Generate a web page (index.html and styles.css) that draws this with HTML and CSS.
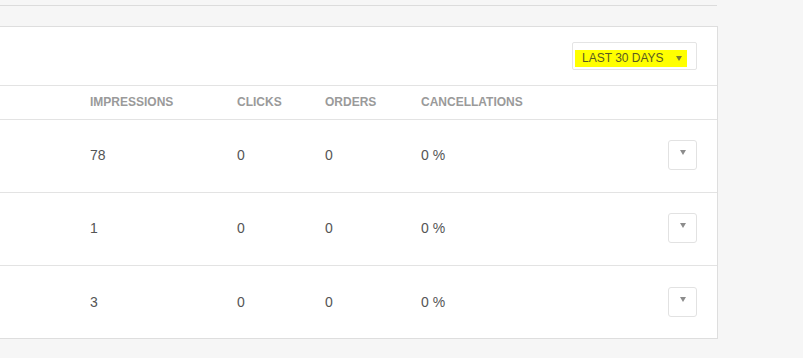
FILE: index.html
```html
<!DOCTYPE html>
<html>
<head>
<meta charset="utf-8">
<link rel="stylesheet" href="styles.css">
</head>
<body>
  <div class="topbar"></div>
  <section class="card">
    <div class="card-head">
      <div class="range-select">
        <span class="range-label">LAST 30 DAYS<i class="caret"></i></span>
      </div>
    </div>
    <div class="row head">
      <div></div>
      <div>IMPRESSIONS</div>
      <div>CLICKS</div>
      <div>ORDERS</div>
      <div>CANCELLATIONS</div>
      <div></div>
    </div>
    <div class="row">
      <div></div>
      <div>78</div>
      <div>0</div>
      <div>0</div>
      <div>0 %</div>
      <div class="actions"><button class="menu-btn"><i class="caret"></i></button></div>
    </div>
    <div class="row">
      <div></div>
      <div>1</div>
      <div>0</div>
      <div>0</div>
      <div>0 %</div>
      <div class="actions"><button class="menu-btn"><i class="caret"></i></button></div>
    </div>
    <div class="row last">
      <div></div>
      <div>3</div>
      <div>0</div>
      <div>0</div>
      <div>0 %</div>
      <div class="actions"><button class="menu-btn"><i class="caret"></i></button></div>
    </div>
  </section>
</body>
</html>
```

FILE: styles.css
```css
html, body {
  margin: 0;
  padding: 0;
  background: #f6f6f6;
  font-family: "Liberation Sans", Arial, sans-serif;
}

.topbar {
  width: 717px;
  height: 5px;
  border-bottom: 1px solid #dcdcdc;
}

/* left border sits just outside the viewport */
.card {
  width: 719px;
  margin: 20px 0 0 -1px;
  background: #fff;
  border: 1px solid #dedede;
  box-sizing: border-box;
}

.card-head {
  height: 59px;
  display: flex;
  justify-content: flex-end;
  align-items: flex-start;
  padding: 15px 20px 0 0;
  box-sizing: border-box;
  border-bottom: 1px solid #e3e3e3;
}

.range-select {
  width: 125px;
  height: 28px;
  box-sizing: border-box;
  border: 1px solid #e4e4e4;
  border-radius: 2px;
  padding: 5px 0 0 2px;
}

.range-label {
  display: inline-flex;
  align-items: center;
  width: 112px;
  height: 17px;
  box-sizing: border-box;
  padding-left: 7px;
  background: #ffff00;
  color: #5a5a22;
  font-size: 12px;
  line-height: 17px;
  white-space: pre;
}

.range-label .caret {
  margin-left: 12px;
  border-left-width: 3.5px;
  border-right-width: 3.5px;
  border-top-color: #7a7a30;
}

.caret {
  display: inline-block;
  width: 0;
  height: 0;
  border-left: 3px solid transparent;
  border-right: 3px solid transparent;
  border-top: 5px solid #8a8a8a;
}

.row {
  display: grid;
  grid-template-columns: 90px 147px 88px 96px 1fr 49px;
  align-items: center;
  height: 73px;
  padding-bottom: 2px;
  border-bottom: 1px solid #e3e3e3;
  box-sizing: border-box;
  font-size: 14px;
  color: #555;
}

.row.last {
  border-bottom: none;
  height: 72px;
  padding-bottom: 1px;
}

.row.head {
  height: 34px;
  font-size: 12px;
  font-weight: bold;
  color: #9a9a9a;
}

.actions {
  display: flex;
}

.menu-btn {
  width: 29px;
  height: 30px;
  padding: 9px 0 0;
  box-sizing: border-box;
  background: #fff;
  border: 1px solid #e2e2e2;
  border-radius: 3px;
  display: flex;
  justify-content: center;
  align-items: flex-start;
}

.menu-btn .caret {
  border-top-color: #8c8c8c;
}
```
